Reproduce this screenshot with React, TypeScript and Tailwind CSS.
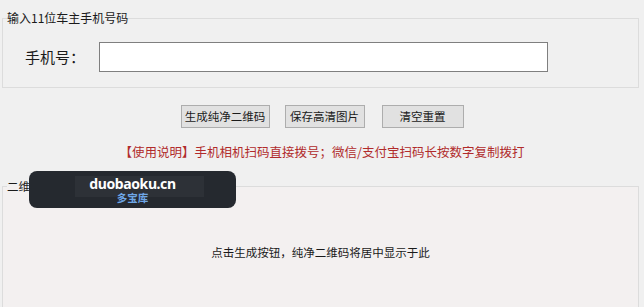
import React from 'react'

const font = { fontFamily: '"Noto Sans CJK SC", "Noto Sans", sans-serif' }

export default function App() {
  return (
    <div
      className="relative w-[644px] h-[307px] overflow-hidden bg-[#f0f0f0] text-[#1a1a1a]"
      style={font}
    >
      {/* 输入区 */}
      <fieldset className="mx-[2px] mt-[10px] w-[637px] border border-[#dcdcdc] px-0 pt-[16px] pb-[15px]">
        <legend className="ml-[4px] px-0 text-[12px] leading-[16px]">输入11位车主手机号码</legend>
        <div className="flex items-center">
          <span className="ml-[22px] w-[74px] text-[15px] leading-[20px]">手机号：</span>
          <input
            type="text"
            className="h-[30px] w-[449px] border border-[#7f7f7f] bg-white px-1 text-[14px] outline-none"
          />
        </div>
      </fieldset>

      {/* 按钮 */}
      <div className="mt-[17px] flex justify-center">
        <button className="h-[23px] w-[89px] border border-[#adadad] bg-[#e1e1e1] text-[11.5px] leading-[21px]">
          生成纯净二维码
        </button>
        <button className="ml-[15px] h-[23px] w-[80px] border border-[#adadad] bg-[#e1e1e1] text-[11.5px] leading-[21px]">
          保存高清图片
        </button>
        <button className="ml-[17px] h-[23px] w-[82px] border border-[#adadad] bg-[#e1e1e1] text-[11.5px] leading-[21px]">
          清空重置
        </button>
      </div>

      <p className="mt-[14px] text-center text-[12.5px] leading-[19px] text-[#b12b2b]">
        【使用说明】手机相机扫码直接拨号；微信/支付宝扫码长按数字复制拨打
      </p>

      {/* 预览区 */}
      <fieldset className="mx-[2px] mt-[17px] h-[160px] w-[637px] border border-[#dcdcdc] bg-[#f3f0f0] px-0 pt-[50px]">
        <legend className="ml-[4px] px-0 text-[11.5px] leading-[16px]">二维码预览</legend>
        <p className="text-center text-[11.5px] leading-[16px]">点击生成按钮，纯净二维码将居中显示于此</p>
      </fieldset>

      {/* 水印 */}
      <div className="absolute left-[29px] top-[171px] flex h-[37px] w-[207px] items-center justify-center rounded-[8px] bg-[#25292f]">
        <div className="absolute left-[46px] top-[5px] h-[21px] w-[129px] bg-[#2d3137]" />
        <div className="relative flex flex-col items-center">
          <span
            className="text-[14px] font-bold leading-[16px] tracking-[-0.4px] text-white"
            style={{ fontFamily: '"Noto Sans", "DejaVu Sans", sans-serif' }}
          >
            duobaoku.cn
          </span>
          <span className="text-[10.5px] font-bold leading-[12px] text-[#6ea6e6]">多宝库</span>
        </div>
      </div>
    </div>
  )
}
